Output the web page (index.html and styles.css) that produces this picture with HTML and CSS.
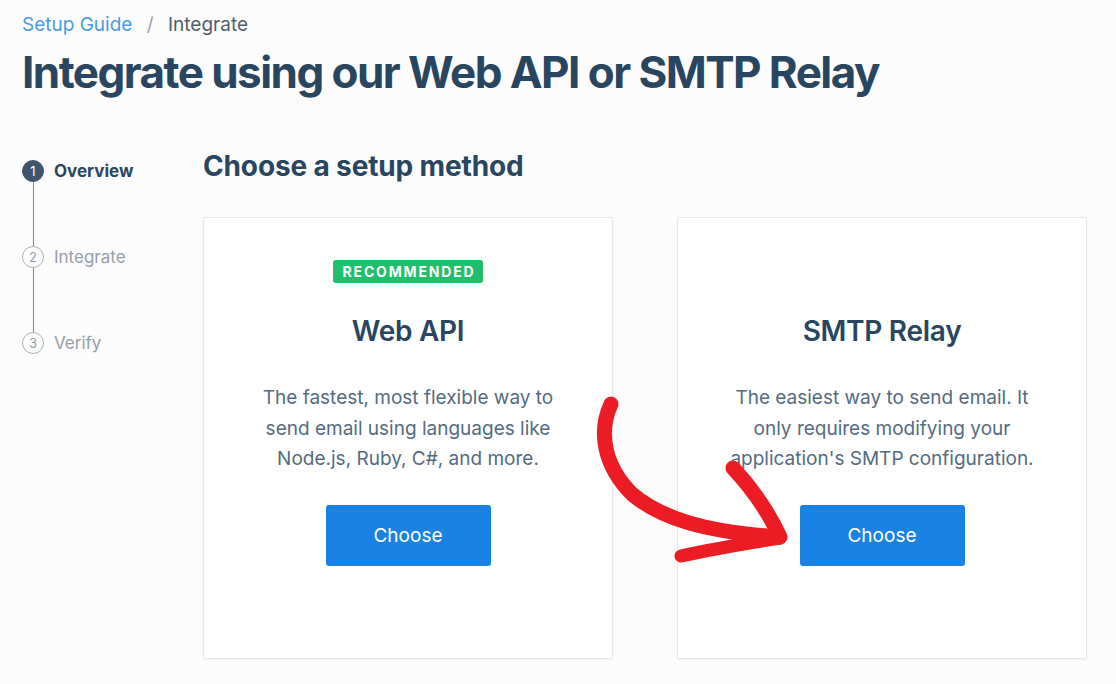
FILE: index.html
```html
<!DOCTYPE html>
<html lang="en">
<head>
    <meta charset="UTF-8">
    <meta name="viewport" content="width=device-width, initial-scale=1.0">
    <title>Setup Guide - Integrate</title>
    <link rel="stylesheet" href="styles.css">
</head>
<body>
    <div class="page">
        <header class="page-header">
            <nav class="breadcrumb">
                <a href="#">Setup Guide</a>
                <span class="sep">/</span>
                <span class="current">Integrate</span>
            </nav>
            <h1>Integrate using our Web API or SMTP Relay</h1>
        </header>

        <div class="layout">
            <ol class="steps">
                <li class="step active">
                    <span class="step-num">1</span>
                    <span class="step-label">Overview</span>
                </li>
                <li class="step-line"></li>
                <li class="step">
                    <span class="step-num">2</span>
                    <span class="step-label">Integrate</span>
                </li>
                <li class="step-line"></li>
                <li class="step">
                    <span class="step-num">3</span>
                    <span class="step-label">Verify</span>
                </li>
            </ol>

            <main class="content">
                <h2>Choose a setup method</h2>
                <div class="methods">
                    <div class="method-card">
                        <span class="badge">Recommended</span>
                        <h3>Web API</h3>
                        <p>The fastest, most flexible way to send email using languages like Node.js, Ruby, C#, and more.</p>
                        <button class="btn">Choose</button>
                    </div>
                    <div class="method-card">
                        <span class="badge hidden">Recommended</span>
                        <h3>SMTP Relay</h3>
                        <p>The easiest way to send email. It only requires modifying your application's SMTP configuration.</p>
                        <button class="btn">Choose</button>
                    </div>
                </div>
            </main>
        </div>

        <!-- hand drawn arrow pointing at the SMTP button -->
        <svg class="arrow" width="1116" height="684" viewBox="0 0 1116 684" fill="none" stroke="#ec1c24" stroke-linecap="round" stroke-linejoin="round">
            <path d="M611 404 C 598 432, 604 466, 632 494 C 660 518, 705 532, 779 537" stroke-width="15"/>
            <path d="M733 468 C 749 485, 767 509, 780 537" stroke-width="15"/>
            <path d="M681 556 C 712 549, 748 543, 780 538" stroke-width="13"/>
        </svg>
    </div>
</body>
</html>
```

FILE: styles.css
```css
* {
    margin: 0;
    padding: 0;
    box-sizing: border-box;
}

body {
    background: #fcfcfc;
    color: #294661;
    font-family: Inter, "Noto Sans", sans-serif;
    min-height: 100vh;
    overflow: hidden;
}

.page {
    position: relative;
    height: 684px;
}

.page-header {
    padding: 12px 22px 0;
}

.breadcrumb {
    font-size: 19px;
    line-height: 26px;
    color: #505e6b;
}

.breadcrumb a {
    color: #4b9be0;
    text-decoration: none;
}

.breadcrumb .sep {
    color: #9aa3ab;
    margin: 0 9px;
}

h1 {
    margin-top: 6px;
    font-size: 44px;
    line-height: 56px;
    font-weight: 700;
    letter-spacing: -0.035em;
    color: #294661;
}

.layout {
    display: flex;
    padding: 48px 22px 0;
}

.steps {
    list-style: none;
    width: 181px;
    padding-top: 12px;
}

.step {
    display: flex;
    align-items: center;
    gap: 10px;
    height: 22px;
    font-size: 17px;
    color: #949fab;
}

.step-num {
    width: 22px;
    height: 22px;
    border-radius: 50%;
    border: 1.5px solid #a9b3bd;
    display: flex;
    align-items: center;
    justify-content: center;
    font-size: 13px;
    color: #949fab;
}

.step.active {
    font-weight: 700;
    color: #294661;
}

.step.active .step-num {
    background: #40566f;
    border-color: #40566f;
    color: #fff;
    font-weight: 400;
}

.step-line {
    width: 1.5px;
    height: 64px;
    margin-left: 10.5px;
    background: #7d8a98;
}

.content {
    flex: 1;
}

h2 {
    font-size: 28px;
    line-height: 36px;
    font-weight: 700;
    letter-spacing: -0.005em;
    color: #294661;
}

.methods {
    display: flex;
    gap: 64px;
    margin-top: 33px;
}

.method-card {
    width: 410px;
    height: 442px;
    background: #fff;
    border: 1px solid #e7e7e7;
    border-radius: 2px;
    box-shadow: 0 1px 2px rgba(0, 0, 0, 0.05);
    display: flex;
    flex-direction: column;
    align-items: center;
    padding-top: 42px;
    text-align: center;
}

.badge {
    display: inline-block;
    background: #1fbf6c;
    color: #fff;
    font-size: 14px;
    line-height: 23px;
    height: 23px;
    font-weight: 700;
    letter-spacing: 0.13em;
    text-transform: uppercase;
    padding: 0 8px 0 10px;
    border-radius: 3px;
}

.badge.hidden {
    visibility: hidden;
}

h3 {
    margin-top: 30px;
    font-size: 28px;
    line-height: 36px;
    font-weight: 600;
    letter-spacing: -0.01em;
    color: #294661;
}

.method-card p {
    margin-top: 34px;
    width: 320px;
    font-size: 19px;
    line-height: 30.5px;
    color: #546b81;
}

.btn {
    margin-top: 30px;
    width: 165px;
    height: 61px;
    border: none;
    border-radius: 3px;
    background: #1a82e2;
    color: #fff;
    font-family: inherit;
    font-size: 19px;
    cursor: pointer;
}

.arrow {
    position: absolute;
    top: 0;
    left: 0;
    pointer-events: none;
}
```
